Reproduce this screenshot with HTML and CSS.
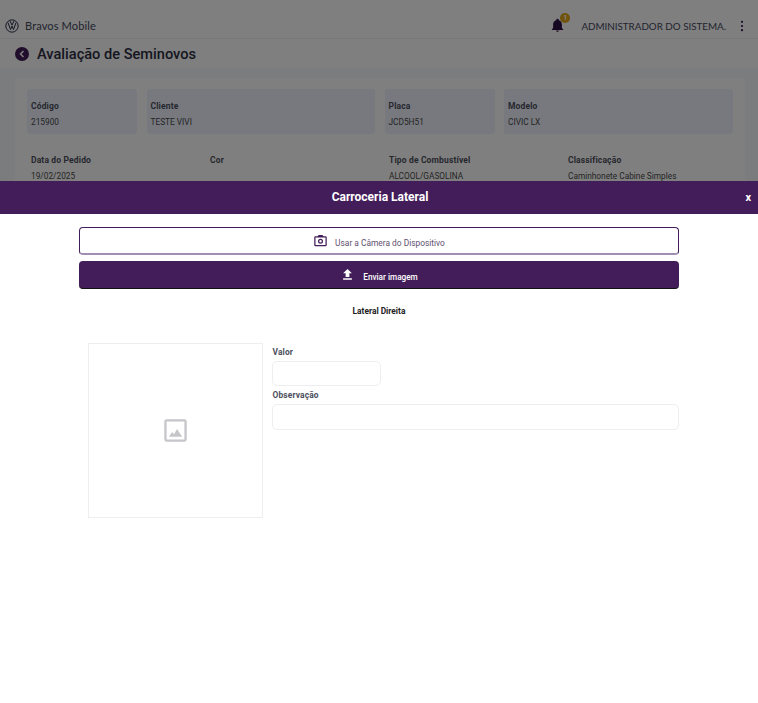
FILE: index.html
```html
<!DOCTYPE html>
<html lang="pt-BR">
<head>
<meta charset="utf-8">
<title>Avaliação de Seminovos</title>
<link rel="stylesheet" href="styles.css">
</head>
<body>
<div class="page">
  <header class="topbar">
    <div class="brand">
      <svg class="vw" viewBox="0 0 24 24" width="14" height="14" fill="none" stroke="#2a2d4a" stroke-width="1.700"><circle cx="12" cy="12" r="10.600"/><path d="M5 6l4.500 12 2.500-6 2.500 6L19 6M8.500 3l3.500 7.500L15.500 3"/></svg>
      <span class="brand-name">Bravos Mobile</span>
    </div>
    <div class="user">
      <span class="bell">
        <svg viewBox="0 0 24 24" width="15" height="15" fill="#2c0f45"><path d="M12 22a2.200 2.200 0 0 0 2.200-2.200H9.800A2.200 2.200 0 0 0 12 22zm7-6v-5.500c0-3.300-1.800-6.100-5-6.800V3a2 2 0 0 0-4 0v.7c-3.200.7-5 3.500-5 6.800V16l-2 2v1h18v-1z"/></svg>
        <span class="badge">1</span>
      </span>
      <span class="user-name">ADMINISTRADOR DO SISTEMA.</span>
      <svg class="dots" viewBox="0 0 4 14" width="4" height="14" fill="#2c0f45"><circle cx="2" cy="2.800" r="1.100"/><circle cx="2" cy="7" r="1.100"/><circle cx="2" cy="11.200" r="1.100"/></svg>
    </div>
  </header>
  <div class="titlebar">
    <span class="back"><svg viewBox="0 0 14 14" width="14" height="14" fill="none" stroke="#fff" stroke-width="1.500"><path d="M8.500 4L5.500 7l3 3"/></svg></span>
    <h1>Avaliação de Seminovos</h1>
  </div>
  <main class="content">
    <section class="card">
      <div class="row-top">
        <div class="field tint"><b>Código</b><span>215900</span></div>
        <div class="field tint"><b>Cliente</b><span>TESTE VIVI</span></div>
        <div class="field tint"><b>Placa</b><span>JCD5H51</span></div>
        <div class="field tint"><b>Modelo</b><span>CIVIC LX</span></div>
      </div>
      <div class="row-second">
        <div class="field"><b>Data do Pedido</b><span>19/02/2025</span></div>
        <div class="field"><b>Cor</b><span></span></div>
        <div class="field"><b>Tipo de Combustível</b><span>ALCOOL/GASOLINA</span></div>
        <div class="field"><b>Classificação</b><span>Caminhonete Cabine Simples</span></div>
      </div>
    </section>
  </main>
</div>
<div class="backdrop"></div>
<div class="modal">
  <div class="modal-head">
    <h2>Carroceria Lateral</h2>
    <span class="close">x</span>
  </div>
  <div class="modal-body">
    <button class="btn btn-outline">
      <svg viewBox="0 0 24 24" width="15" height="15" fill="#431d59"><path d="M9 3L7.200 5H4a2 2 0 0 0-2 2v12a2 2 0 0 0 2 2h16a2 2 0 0 0 2-2V7a2 2 0 0 0-2-2h-3.200L15 3zm-5 4h16v12H4zm8 2a4 4 0 1 0 0 8 4 4 0 0 0 0-8zm0 2a2 2 0 1 1 0 4 2 2 0 0 1 0-4z"/></svg>
      <span>Usar a Câmera do Dispositivo</span>
    </button>
    <button class="btn btn-solid">
      <svg viewBox="0 0 24 24" width="15" height="15" fill="#fff"><path d="M9 16h6v-6h4l-7-7-7 7h4zm-4 2h14v2.500H5z"/></svg>
      <span>Enviar imagem</span>
    </button>
    <p class="section-title">Lateral Direita</p>
    <div class="photo-row">
      <div class="photo">
        <svg viewBox="0 0 24 24" width="23" height="23"><rect x="1.500" y="1.500" width="21" height="21" rx="1" fill="#fff" stroke="#c6c6ca" stroke-width="2.400"/><path d="M5 18.500l3.500-5 2 2.300 3-5.300 5.500 8z" fill="#c6c6ca"/></svg>
      </div>
      <div class="form">
        <label class="form-label">Valor</label>
        <input class="input input-short" type="text">
        <label class="form-label label-obs">Observação</label>
        <input class="input input-wide" type="text">
      </div>
    </div>
  </div>
</div>
</body>
</html>
```
FILE: styles.css
```css
* { box-sizing: border-box; }
html, body { margin: 0; height: 100%; overflow: hidden; }
body { font-family: Roboto, "Liberation Sans", sans-serif; background: #fff; color: #333; }

.page { height: 703px; display: flex; flex-direction: column; background: #f6f9fc; }

.topbar { height: 39px; padding: 13px 14px 0 5px; display: flex; justify-content: space-between; align-items: center; background: #fff; border-bottom: 1px solid #eceef0; }
.brand { display: flex; align-items: center; gap: 6px; }
.vw { display: block; }
.brand-name { font-family: Lato, sans-serif; font-size: 11.100px; color: #45485c; letter-spacing: .1px; }
.user { display: flex; align-items: center; }
.bell { position: relative; display: flex; margin-right: 16px; }
.badge { position: absolute; left: 10px; top: -5px; width: 10px; height: 10px; border-radius: 50%; background: #e0a411; color: #fff; font-size: 7px; font-weight: 700; line-height: 10px; text-align: center; }
.user-name { font-family: Lato, sans-serif; font-size: 9.800px; color: #45485c; margin-right: 14px; }
.titlebar { height: 29px; padding-left: 15px; display: flex; align-items: center; gap: 8px; background: #fff; }
.back { width: 14px; height: 14px; border-radius: 50%; background: #431d59; display: flex; }
h1 { margin: 0; font-size: 14.600px; font-weight: 500; color: #2b2d42; }

.content { flex: 1; padding: 10px 13px 0 15px; }
.card { height: 200px; padding: 11px 12px; background: #ffffff; border-radius: 4px; }
.row-top { display: grid; grid-template-columns: 110px 228.500px 110px 229px; column-gap: 9.500px; }
.row-second { display: grid; grid-template-columns: repeat(4, 179px); margin-top: 9px; }
.field { padding: 12px 4px 0; display: flex; flex-direction: column; gap: 6px; font-size: 8.500px; height: 45px; color: #4a4a4a; }
.field b { font-weight: 700; color: #4d4f5c; letter-spacing: .15px; }
.field span { font-size: 8.300px; min-height: 10px; }
.tint { background: #eef3ff; border-radius: 3px; }

.backdrop { position: fixed; inset: 0; background: rgba(0, 0, 0, .5); }
.modal { position: fixed; left: 0; right: 0; top: 181px; bottom: 0; background: #fff; }
.modal-head { height: 33px; padding: 0 0 2px 2px; background: #431d59; color: #fff; display: flex; align-items: center; justify-content: center; position: relative; }
h2 { margin: 0; font-size: 12px; font-weight: 700; }
.close { position: absolute; right: 7px; top: 10px; font-size: 11px; font-weight: 700; line-height: 13px; }
.modal-body { padding: 13px 79px 0; }
.btn { width: 100%; height: 28px; display: flex; align-items: center; justify-content: center; gap: 7px; border-radius: 4px; font-family: Roboto, sans-serif; font-size: 8.400px; padding: 0; }
.btn span { margin-top: 4px; }
.btn-outline { background: #fff; color: #5f5170; border: 1px solid #431d59; border-bottom: 2px solid #a08fb0; }
.btn-solid { margin-top: 6px; gap: 8px; background: #431d59; color: #fff; font-size: 8.200px; font-weight: 500; border: 0; border-bottom: 1px solid #111; }
.section-title { margin: 17px 0 0; text-align: center; font-size: 8.400px; font-weight: 700; line-height: 10px; color: #222; }
.photo-row { display: flex; gap: 9px; margin-top: 27px; padding-left: 9px; }
.photo { width: 175px; height: 175px; padding-bottom: 1px; border: 1px solid #eeeeee; display: flex; align-items: center; justify-content: center; }
.form { flex: 1; display: flex; flex-direction: column; padding-top: 4px; }
.form-label { padding-left: .5px; font-size: 8.400px; font-weight: 700; line-height: 10px; color: #4d4f5c; letter-spacing: .15px; }
.label-obs { margin-top: 4px; }
.input { display: block; height: 25px; margin-top: 4px; border: 1px solid #eeeeee; border-radius: 5px; background: #fff; }
.input-short { width: 109px; }
.input-wide { width: 100%; height: 26px; }
```
